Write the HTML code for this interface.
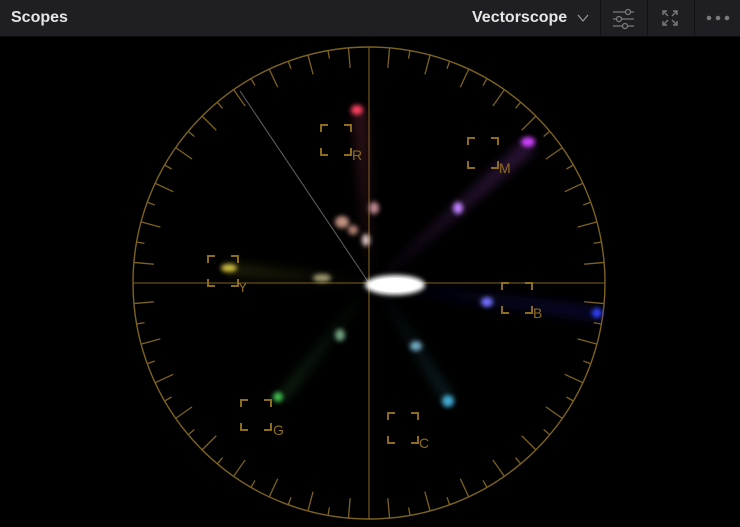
<!DOCTYPE html>
<html><head><meta charset="utf-8"><style>
html,body{margin:0;padding:0;background:#000;width:740px;height:527px;overflow:hidden;font-family:"Liberation Sans",sans-serif}
.hdr{position:absolute;left:0;top:0;width:740px;height:36px;background:#1f1f23;border-bottom:1px solid #0c0c0e}
.t{position:absolute;left:11px;top:9px;color:#e6e6e6;font-size:16px;font-weight:bold}
.v{position:absolute;left:472px;top:9px;color:#e6e6e6;font-size:16px;font-weight:bold}
.sep{position:absolute;top:0;width:1px;height:36px;background:#111113}
</style></head><body>
<div class="hdr">
<div class="t">Scopes</div>
<div class="v">Vectorscope</div>
<svg style="position:absolute;left:577px;top:13px" width="12" height="10"><path d="M1 2 L6 8 L11 2" fill="none" stroke="#999" stroke-width="1.2"/></svg>
<div class="sep" style="left:600px"></div><div class="sep" style="left:647px"></div><div class="sep" style="left:694px"></div>
<svg style="position:absolute;left:612px;top:8px" width="24" height="22" fill="none" stroke="#7a7a7a" stroke-width="1.3">
<line x1="1" y1="4" x2="22" y2="4"/><circle cx="16" cy="4" r="2.5" fill="#1f1f23"/>
<line x1="1" y1="11" x2="22" y2="11"/><circle cx="7" cy="11" r="2.5" fill="#1f1f23"/>
<line x1="1" y1="18" x2="22" y2="18"/><circle cx="13" cy="18" r="2.5" fill="#1f1f23"/></svg>
<svg style="position:absolute;left:662px;top:10px" width="16" height="16" fill="none" stroke="#7a7a7a" stroke-width="1.4">
<path d="M1 5V1H5M1 1L6 6M11 1H15V5M15 1L10 6M1 11V15H5M1 15L6 10M11 15H15V11M15 15L10 10"/></svg>
<svg style="position:absolute;left:706px;top:14px" width="24" height="8" fill="#7a7a7a"><circle cx="3" cy="4" r="2.3"/><circle cx="12" cy="4" r="2.3"/><circle cx="21" cy="4" r="2.3"/></svg>
</div>
<svg id="s" style="position:absolute;left:0;top:37px" width="740" height="490" viewBox="0 37 740 490">
<defs>
<filter id="b1" x="-50%" y="-50%" width="200%" height="200%"><feGaussianBlur stdDeviation="6"/></filter>
<filter id="b2" x="-50%" y="-50%" width="200%" height="200%"><feGaussianBlur stdDeviation="2.5"/></filter>
</defs>
<g id="tk" stroke="#7d6320" stroke-width="1.3"></g>
<circle cx="369" cy="283" r="236" fill="none" stroke="#7d6320" stroke-width="1.4"/>
<line x1="133" y1="283" x2="605" y2="283" stroke="#7d6320" stroke-width="1.1"/>
<line x1="369" y1="47" x2="369" y2="519" stroke="#7d6320" stroke-width="1.1"/>
<line x1="369" y1="283" x2="240" y2="91" stroke="#5c5c5c" stroke-width="1.1"/>
<g filter="url(#b1)" opacity="0.55">
<path d="M370 283 L355 110 L365 110 Z" fill="#7a3040"/>
<path d="M375 283 L525 140 L535 150 Z" fill="#5a2a70"/>
<path d="M370 283 L228 265 L228 273 Z" fill="#5a5a20"/>
<path d="M380 285 L598 310 L598 318 Z" fill="#1a1a90"/>
<path d="M370 286 L278 397 L285 400 Z" fill="#2a5a30"/>
<path d="M378 286 L446 402 L452 398 Z" fill="#2a5a6a"/>
</g>
<g filter="url(#b2)">
<ellipse cx="357" cy="110" rx="6" ry="5" fill="#ff4060"/>
<ellipse cx="528" cy="142" rx="7" ry="5" fill="#d040ff"/>
<ellipse cx="458" cy="208" rx="5" ry="6" fill="#c080ff"/>
<ellipse cx="229" cy="268" rx="8" ry="4" fill="#d0c040"/>
<ellipse cx="322" cy="278" rx="9" ry="4" fill="#a09a70"/>
<ellipse cx="487" cy="302" rx="6" ry="5" fill="#7070ff"/>
<ellipse cx="597" cy="313" rx="5" ry="5" fill="#3040ff"/>
<ellipse cx="340" cy="335" rx="5" ry="6" fill="#70a080"/>
<ellipse cx="278" cy="397" rx="5" ry="5" fill="#40c050"/>
<ellipse cx="416" cy="346" rx="6" ry="5" fill="#70a8c0"/>
<ellipse cx="448" cy="401" rx="6" ry="6" fill="#40a8d0"/>
<ellipse cx="374" cy="208" rx="5" ry="6" fill="#c08890"/>
<ellipse cx="342" cy="222" rx="7" ry="6" fill="#c09080"/>
<ellipse cx="353" cy="230" rx="5" ry="5" fill="#b08070"/>
<ellipse cx="366" cy="240" rx="4" ry="6" fill="#e0c8c8"/>
<ellipse cx="395" cy="285" rx="30" ry="10" fill="#fff"/>
</g>
<ellipse cx="395" cy="285" rx="24" ry="7" fill="#fff"/>
<g id="bx" fill="none" stroke="#8e6c1e" stroke-width="2"></g>
<g fill="#8e6c1e" font-size="14" font-family="Liberation Sans,sans-serif">
<text x="352" y="160">R</text><text x="499" y="173">M</text><text x="238" y="292">Y</text>
<text x="533" y="318">B</text><text x="273" y="435">G</text><text x="419" y="448">C</text></g>
</svg>
<script>
var ns="http://www.w3.org/2000/svg",tk=document.getElementById('tk'),cx=369,cy=283,R=236;
for(var i=0;i<72;i++){if(i%18==0)continue;var a=i*5*Math.PI/180,L=(i%2==1)?20:8;
var l=document.createElementNS(ns,'line');
l.setAttribute('x1',cx+R*Math.cos(a));l.setAttribute('y1',cy+R*Math.sin(a));
l.setAttribute('x2',cx+(R-L)*Math.cos(a));l.setAttribute('y2',cy+(R-L)*Math.sin(a));tk.appendChild(l);}
var bx=document.getElementById('bx'),B=[[321,125],[468,138],[208,256],[502,283],[241,400],[388,413]];
B.forEach(function(b){var x=b[0],y=b[1],s=30,c=7;
var d='M'+x+' '+(y+c)+'V'+y+'H'+(x+c)+'M'+(x+s-c)+' '+y+'H'+(x+s)+'V'+(y+c)+'M'+(x+s)+' '+(y+s-c)+'V'+(y+s)+'H'+(x+s-c)+'M'+(x+c)+' '+(y+s)+'H'+x+'V'+(y+s-c);
var p=document.createElementNS(ns,'path');p.setAttribute('d',d);bx.appendChild(p);});
</script>
</body></html>
